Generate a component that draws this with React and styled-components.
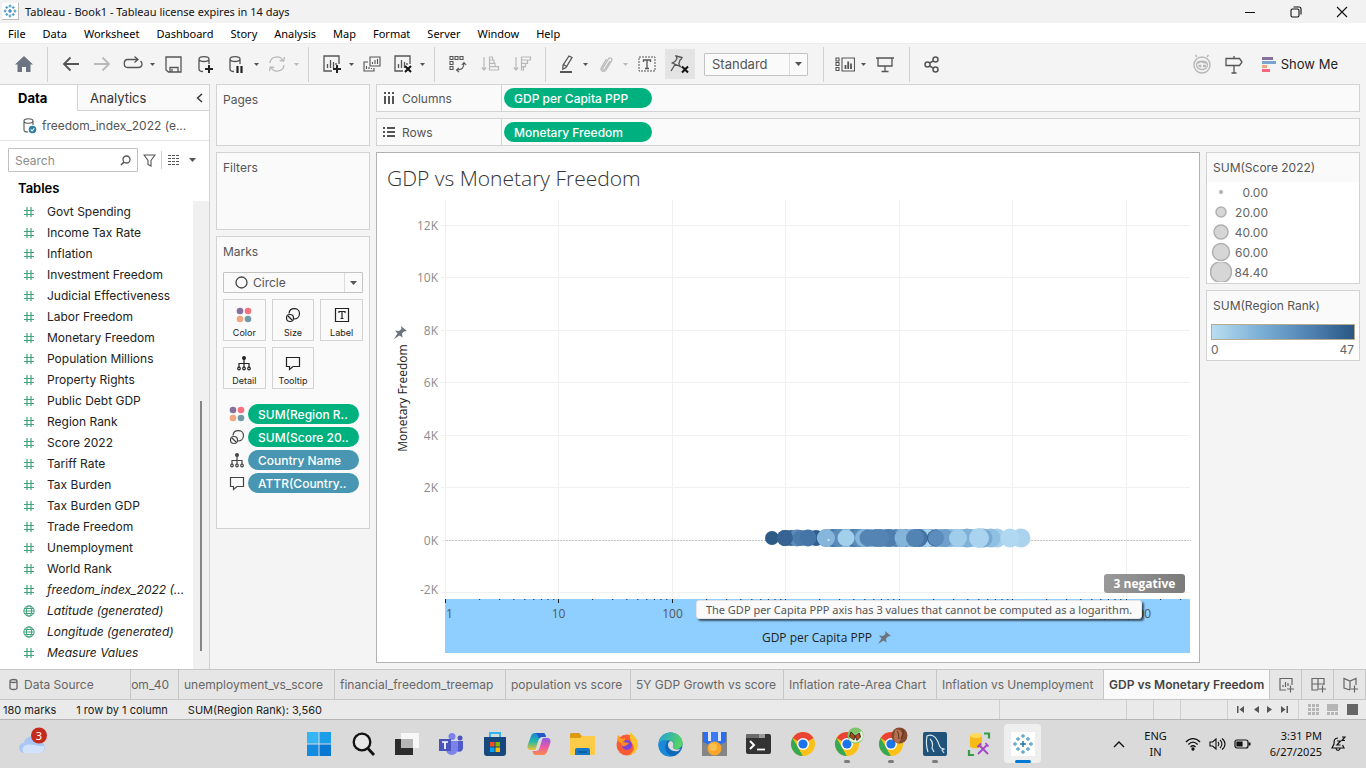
import React from "react";
import styled, { createGlobalStyle, css } from "styled-components";

const ui = `Inter, "Liberation Sans", sans-serif`;
const system = `"Noto Sans", "Open Sans", sans-serif`;
const vizFont = `"Open Sans", "Noto Sans", sans-serif`;
const line = "#d2d2d2";
const green = "#00b180";
const blue = "#4996b2";

const Global = createGlobalStyle`
  *, *::before, *::after { box-sizing: border-box; }
  body { margin: 0; background: #f4f4f4; font-family: ${ui}; font-size: 12px; color: #333; }
  button, select, input { font: inherit; color: inherit; }
  button { background: none; border: 0; padding: 0; }
  svg { display: block; flex: none; }
  ul { list-style: none; margin: 0; padding: 0; }
  h1, h2, h3, p { margin: 0; font-size: 12px; font-weight: 400; }
`;

/* ---------- frame ---------- */
const Page = styled.div`
  min-height: 100vh;
  display: flex;
  flex-direction: column;
`;
const TitleBar = styled.header`
  height: 23px;
  display: flex;
  align-items: center;
  background: #f2f2f2;
  padding: 0 18px 0 2px;
  gap: 6px;
  font-family: ${system};
  font-size: 11px;
  color: #111;
`;
const AppBadge = styled.span`
  display: flex;
  padding: 1px;
  background: #fff;
  border-right: 1px solid #bbb;
  border-bottom: 1px solid #bbb;
`;
const WindowButtons = styled.div`
  margin-left: auto;
  display: flex;
  gap: 34px;
`;
const MenuBar = styled.nav`
  height: 20px;
  display: flex;
  align-items: center;
  gap: 17px;
  padding: 2px 8px 0;
  background: #fff;
  font-family: ${system};
  font-size: 11px;
`;
const MenuItem = styled.button`
  color: #000;
  line-height: 18px;
`;
const Toolbar = styled.div`
  height: 41px;
  display: flex;
  align-items: center;
  padding: 0 28px 0 8px;
  background: #f4f4f4;
  border-top: 1px solid #ececec;
`;
const Tool = styled.button`
  width: ${(p) => p.$w || 31}px;
  height: 30px;
  display: flex;
  align-items: center;
  justify-content: center;
  color: ${(p) => (p.$off ? "#b9b9b9" : "#555")};
  background: ${(p) => (p.$on ? "#e4e4e4" : "none")};
  margin: ${(p) => (p.$on ? "0 9px 0 1px" : "0")};
`;
const Divider = styled.span`
  width: 1px;
  height: 35px;
  margin: 0 7px;
  background: ${line};
`;
const ToolSelectBox = styled.div`
  position: relative;
  width: 104px;
  margin-right: 8px;
`;
const Select = styled.select`
  appearance: none;
  width: 100%;
  height: ${(p) => p.$h}px;
  padding: 0 20px 0 ${(p) => p.$left}px;
  border: 1px solid #c3c3c3;
  border-radius: 1px;
  background: #fafafa;
  font-size: ${(p) => p.$size}px;
  color: #555;
`;
const SelectArrow = styled.span`
  position: absolute;
  top: 1px;
  right: 1px;
  bottom: 1px;
  width: 18px;
  display: flex;
  align-items: center;
  justify-content: center;
  border-left: 1px solid #dcdcdc;
  color: #666;
  pointer-events: none;
`;
const ToolbarEnd = styled.div`
  margin-left: auto;
  display: flex;
  align-items: center;
`;
const ShowMe = styled.button`
  display: flex;
  align-items: center;
  gap: 5px;
  margin-left: 12px;
  font-size: 13px;
  color: #222;
`;

const Main = styled.main`
  flex: 1;
  display: flex;
  background: #f4f4f4;
`;

/* ---------- data pane ---------- */
const DataPane = styled.aside`
  width: 210px;
  flex: none;
  display: flex;
  flex-direction: column;
  background: #fff;
  border-right: 1px solid ${line};
  border-top: 1px solid ${line};
`;
const PaneTabs = styled.div`
  display: flex;
  height: 26px;
`;
const PaneTab = styled.button`
  flex: ${(p) => (p.$active ? "0 0 77px" : "1")};
  display: flex;
  align-items: center;
  justify-content: space-between;
  text-align: left;
  font-size: 13px;
  padding: ${(p) => (p.$active ? "0 0 0 18px" : "0 6px 0 12px")};
  font-weight: ${(p) => (p.$active ? 700 : 400)};
  color: ${(p) => (p.$active ? "#000" : "#333")};
  background: ${(p) => (p.$active ? "#fff" : "#fafafa")};
  ${(p) =>
    !p.$active &&
    css`
      border-left: 1px solid ${line};
      border-bottom: 1px solid ${line};
    `}
`;
const SourceRow = styled.div`
  display: flex;
  align-items: center;
  gap: 5px;
  height: 30px;
  padding-left: 22px;
  border-bottom: 1px solid #e2e2e2;
  color: #555;
`;
const SearchRow = styled.div`
  display: flex;
  align-items: center;
  margin-top: 7px;
  padding-left: 8px;
  color: #555;
`;
const SearchBox = styled.label`
  display: flex;
  align-items: center;
  width: 130px;
  height: 24px;
  border: 1px solid #c0c0c0;
  border-radius: 1px;
  padding: 0 6px;
`;
const SearchInput = styled.input`
  flex: 1;
  min-width: 0;
  border: 0;
  padding: 0;
  outline: 0;
  background: none;
  &::placeholder {
    color: #8c8c8c;
  }
`;
const SmallIcon = styled.button`
  display: flex;
  align-items: center;
  justify-content: center;
  width: ${(p) => p.$w}px;
  height: 18px;
  color: #555;
  border-right: ${(p) => (p.$rule ? `1px solid ${line}` : 0)};
`;
const TablesTitle = styled.h2`
  font-size: 13px;
  font-weight: 600;
  line-height: 29px;
  height: 29px;
  padding: 2px 0 0 18px;
  color: #000;
`;
const FieldArea = styled.div`
  flex: 1;
  display: flex;
`;
const FieldList = styled.ul`
  flex: 1;
  min-width: 0;
`;
const Field = styled.li`
  display: flex;
  align-items: center;
  gap: 12px;
  height: 21px;
  padding-left: 23px;
  white-space: nowrap;
  color: #222;
  font-style: ${(p) => (p.$italic ? "italic" : "normal")};
`;
const Track = styled.div`
  width: 16px;
  background: #f0f0f0;
  padding: 200px 0 0 7px;
`;
const Thumb = styled.div`
  width: 2px;
  height: 250px;
  background: #858585;
`;

/* ---------- cards ---------- */
const CardColumn = styled.div`
  width: 154px;
  flex: none;
  margin-left: 6px;
  display: flex;
  flex-direction: column;
  gap: 6px;
`;
const Card = styled.section`
  min-height: ${(p) => p.$h}px;
  border: 1px solid ${line};
  background: #fafafa;
  padding: 6px;
`;
const CardTitle = styled.h2`
  line-height: 18px;
  color: #555;
`;
const MarkSelect = styled.div`
  position: relative;
  margin: 11px 0 6px;
  color: #444;
`;
const MarkGlyph = styled.span`
  position: absolute;
  left: 12px;
  top: 4px;
  pointer-events: none;
`;
const MarkGrid = styled.div`
  display: grid;
  grid-template-columns: repeat(3, 1fr);
  gap: 6px;
`;
const MarkButton = styled.button`
  height: 42px;
  display: flex;
  flex-direction: column;
  align-items: center;
  justify-content: flex-end;
  gap: 4px;
  padding-bottom: 1px;
  border: 1px solid ${line};
  font-size: 9px;
  line-height: 12px;
  color: #222;
`;
const Encodings = styled.ul`
  display: flex;
  flex-direction: column;
  gap: 3px;
  padding: 15px 4px 0 6px;
`;
const Encoding = styled.li`
  display: flex;
  align-items: center;
  gap: 3px;
  color: #444;
`;
const Pill = styled.button`
  flex: ${(p) => (p.$w ? `0 0 ${p.$w}px` : "1")};
  height: 20px;
  border-radius: 10px;
  padding: 0 10px;
  text-align: left;
  white-space: nowrap;
  overflow: hidden;
  font-weight: 500;
  color: #fff;
  background: ${(p) => p.$color};
`;

/* ---------- worksheet ---------- */
const Workspace = styled.div`
  flex: 1;
  min-width: 0;
  display: flex;
  flex-direction: column;
  gap: 6px;
  padding: 0 6px 6px;
`;
const Shelf = styled.section`
  display: flex;
  height: 28px;
  border: 1px solid ${line};
  background: #fafafa;
`;
const ShelfName = styled.h2`
  width: 125px;
  display: flex;
  align-items: center;
  gap: 7px;
  padding-left: 6px;
  margin-right: 2px;
  border-right: 1px solid ${line};
  color: #555;
`;
const ShelfBody = styled.div`
  display: flex;
  align-items: center;
`;
const SheetArea = styled.div`
  flex: 1;
  display: flex;
  gap: 6px;
`;
const Viz = styled.section`
  flex: 1;
  min-width: 0;
  background: #fff;
  border: 1px solid #b2b2b2;
`;
const VizTitle = styled.h1`
  height: 46px;
  padding: 9px 10px 0;
  font-family: ${vizFont};
  font-size: 21px;
  font-weight: 300;
  line-height: 32px;
  color: #333;
`;
const ChartBox = styled.div`
  position: relative;
  font-family: ${vizFont};
`;
const Chart = styled.svg`
  width: 100%;
  height: auto;
`;
const Tooltip = styled.div`
  position: absolute;
  right: 57px;
  bottom: 39px;
  width: 446px;
  height: 19px;
  border: 1px solid #e4e4e4;
  border-radius: 3px;
  background: #fafafa;
  box-shadow: 2px 2px 2px rgba(0, 0, 0, 0.6);
  font-family: ${system};
  font-size: 11px;
  line-height: 17px;
  text-align: center;
  white-space: nowrap;
  color: #555;
`;
const NegativeBadge = styled.button`
  position: absolute;
  right: 14px;
  bottom: 65px;
  width: 81px;
  height: 19px;
  border-radius: 3px;
  background: linear-gradient(90deg, #9a9a9a, #7a7a7a);
  font-size: 12px;
  font-weight: 700;
  color: #fff;
`;

const Legends = styled.aside`
  width: 154px;
  flex: none;
  display: flex;
  flex-direction: column;
  gap: 6px;
`;
const Legend = styled.section`
  border: 1px solid ${line};
  background: #fff;
`;
const LegendTitle = styled.h2`
  line-height: 29px;
  height: 29px;
  padding-left: 6px;
  background: #fafafa;
  color: #555;
`;
const SizeRow = styled.li`
  display: flex;
  align-items: center;
  height: 20px;
  width: 61px;
  overflow: hidden;
  color: #666;
`;
const SizeDot = styled.svg`
  margin-left: 3px;
`;
const SizeValue = styled.span`
  margin-left: auto;
`;
const SizeList = styled.ul`
  height: 101px;
  overflow: hidden;
`;
const Ramp = styled.div`
  height: 16px;
  margin: 4px 4px 0;
  border: 1px solid #b4ac8c;
  background: linear-gradient(90deg, #b9ddf1, #7db1d8 33%, #4c7eae 72%, #2a5783);
`;
const RampEnds = styled.div`
  display: flex;
  justify-content: space-between;
  padding: 0 5px 0 4px;
  line-height: 20px;
  color: #666;
`;

/* ---------- sheet tabs and status ---------- */
const SheetTabs = styled.nav`
  display: flex;
  height: 31px;
  border-top: 1px solid #c6c6c6;
  border-bottom: 1px solid #c6c6c6;
  background: #e6e6e6;
`;
const SheetTab = styled.button`
  flex: ${(p) => (p.$grow ? 1 : 0)} 0 ${(p) => p.$w}px;
  min-width: 0;
  display: flex;
  align-items: center;
  justify-content: ${(p) => p.$align || "flex-start"};
  gap: 4px;
  padding: 0 ${(p) => (p.$align === "flex-end" ? 9 : 5)}px 0 5px;
  overflow: hidden;
  white-space: nowrap;
  border-right: 1px solid #c6c6c6;
  color: ${(p) => (p.$active ? "#444" : "#666")};
  font-weight: ${(p) => (p.$active ? 600 : 400)};
  background: ${(p) => (p.$active ? "#fafafa" : "none")};
`;
const StatusBar = styled.footer`
  display: flex;
  height: 20px;
  background: #eaeaea;
  border-bottom: 1px solid #b5b5b5;
  font-size: 11px;
  line-height: 20px;
  color: #222;
`;
const StatusTexts = styled.div`
  flex: 1;
  display: flex;
  gap: 20px;
  padding-left: 3px;
`;
const StatusCell = styled.div`
  width: ${(p) => p.$w}px;
  display: flex;
  align-items: center;
  justify-content: space-evenly;
  border-left: 1px solid #cfcfcf;
  color: #666;
`;

/* ---------- taskbar ---------- */
const Taskbar = styled.footer`
  height: 48px;
  display: flex;
  align-items: center;
  background: #dadada;
  font-family: ${system};
  font-size: 11px;
  color: #111;
`;
const TaskSide = styled.div`
  flex: 297 0 0;
  padding-left: 18px;
`;
const TaskIcons = styled.div`
  flex: none;
  display: flex;
`;
const TaskIcon = styled.button`
  position: relative;
  width: 44px;
  height: 48px;
  display: flex;
  align-items: center;
  justify-content: center;
  &::before {
    content: "";
    position: absolute;
    inset: 4px 4px 5px 3px;
    z-index: 0;
    border-radius: 4px;
    background: ${(p) => (p.$active ? "#efefef" : "none")};
  }
  &::after {
    content: "";
    position: absolute;
    bottom: 5px;
    left: 50%;
    height: 3px;
    border-radius: 2px;
    width: ${(p) => (p.$active ? 16 : 6)}px;
    margin-left: ${(p) => (p.$active ? -8 : -3)}px;
    background: ${(p) => (p.$active ? "#0078d4" : p.$open ? "#7c7c7c" : "none")};
  }
  svg {
    position: relative;
  }
`;
const Tray = styled.div`
  flex: 321 0 0;
  display: flex;
  align-items: center;
  justify-content: flex-end;
  padding-right: 20px;
`;
const TrayText = styled.div`
  line-height: 16px;
  text-align: ${(p) => p.$align};
  margin-right: ${(p) => p.$gap}px;
`;
const TrayIcons = styled.div`
  display: flex;
  align-items: center;
  gap: 8px;
  margin-right: 19px;
`;

/* ---------- icons ---------- */
const Svg = ({ w = 20, h = w, vb, sw = 1.3, children }) => (
  <svg width={w} height={h} viewBox={vb || `0 0 ${w} ${h}`} fill="none" stroke="currentColor" strokeWidth={sw}>
    {children}
  </svg>
);
const Caret = ({ off }) => (
  <svg width="5" height="3" viewBox="0 0 5 3" fill={off ? "#b9b9b9" : "#555"}>
    <path d="M0 0h5L2.500 3z" />
  </svg>
);
const ArrowDown = () => (
  <svg width="7" height="4" viewBox="0 0 7 4" fill="#555">
    <path d="M0 0h7L3.500 4z" />
  </svg>
);
const Plus = ({ x, y }) => <path d={`M${x - 4} ${y}h8M${x} ${y - 4}v8`} stroke="#222" strokeWidth="2" />;
const Cross = ({ x, y }) => <path d={`M${x - 3} ${y - 3}l6 6M${x + 3} ${y - 3}l-6 6`} stroke="#111" strokeWidth="2" />;
const Cylinder = () => <path d="M2 4v10c0 1.500 2 2.500 4 2.500M12 4v5M2 4c0-3.300 10-3.300 10 0s-10 3.300-10 0z" />;

const HomeIcon = () => (
  <svg width="18" height="16" viewBox="0 0 18 16" fill="#6b7480">
    <path d="M9 0l9 8.500h-2.500V16H11v-5H7v5H2.500V8.500H0z" />
  </svg>
);
const BackIcon = ({ flip }) => (
  <Svg w={18} h={16} sw={1.8}>
    <path d={flip ? "M1 8h15M9.500 1.500L16 8l-6.500 6.500" : "M17 8H2M8.500 1.500L2 8l6.500 6.500"} />
  </Svg>
);
const RedoIcon = () => (
  <Svg w={20} h={16}>
    <path d="M14 3.500H4.500c-4.300 0-4.300 8 0 8h11c4 0 4.300-4.500 2-6.500M11.500 .5l3.500 3-3.500 3" />
  </Svg>
);
const SaveIcon = () => (
  <Svg w={17}>
    <path d="M1 1h15v15H3.500L1 14zM5 16v-4.500h8V16M7 13v3" />
  </Svg>
);
const DbPlus = () => (
  <Svg w={17} h={19}>
    <Cylinder />
    <Plus x={12} y={14} />
  </Svg>
);
const DbPause = () => (
  <Svg w={17} h={19}>
    <Cylinder />
    <path d="M9.500 11v7M13.500 11v7" stroke="#222" strokeWidth="2.200" />
  </Svg>
);
const RefreshIcon = () => (
  <Svg w={18} h={16}>
    <path d="M2 7c.5-7 10-8 13-2.500M16.500 1l-.8 4-4-.5M16 9c-.5 7-10 8-13 2.500M1.500 15l.8-4 4 .5" />
  </Svg>
);
const SheetIcon = ({ cross }) => (
  <Svg w={20} h={18}>
    <path d="M10 16H2V1h15v8M5.500 13V9M8.500 13V5M11.500 13V7M14 10V8" />
    {cross ? <Cross x={15} y={14} /> : <Plus x={15} y={14} />}
  </Svg>
);
const DupIcon = () => (
  <Svg w={18} h={17} sw={1.1}>
    <path d="M7 1h10v9H7zM9.500 8V6M12 8V4M14.500 8V3M5 6H1v9h10v-3M3.500 13v-3M6 13v-2M8.500 13v-1" />
  </Svg>
);
const SwapIcon = () => (
  <Svg w={18} h={18} sw={1.1}>
    <path d="M1 1.500h3v3H1zM6 1.500h3v3H6zM11 1.500h3v3h-3zM1 6.500h3v3H1zM1 11.500h3v3H1zM15 8c0 5-3 7-7 7M12.800 10L15 7.500l2.200 2.500M10 12.800L7.500 15l2.500 2.200" />
  </Svg>
);
const SortIcon = ({ desc }) => (
  <Svg w={19} h={16} sw={1.2}>
    <path d="M3 1v13M.8 11.500L3 14l2.200-2.500" />
    <path d={desc ? "M8.500 1h9v3h-9zM8.500 4h6v3.300h-6zM8.500 7.300h4v3.300h-4zM8.500 10.600h2V14h-2z" : "M8.500 1h3v3h-3zM8.500 4h4.500v3.300H8.500zM8.500 7.300H14v3.300H8.500zM8.500 10.600h9V14h-9z"} />
  </Svg>
);
const PenIcon = () => (
  <Svg w={16} h={20}>
    <path d="M10 2l3 1.500-6 10-3.200 1.700.2-4zM4.500 10.500l3 2" />
    <path d="M1 18h12" strokeWidth="2" />
  </Svg>
);
const ClipIcon = () => (
  <Svg w={14} h={18}>
    <path d="M11 6L6 14c-1 1.500-3 .3-2-1.200L9.500 4c1.500-2.300 4.500-.5 3 2L7 15c-2 3-6.500.5-4.500-2.700L7.500 4" />
  </Svg>
);
const TextBox = () => (
  <Svg w={18} h={16}>
    <path d="M1 1h16v14H1z" strokeDasharray="2 1" strokeWidth="1" />
    <path d="M5.500 6V4h7v2M9 4v8.500M7 12.500h4" />
  </Svg>
);
const PinX = () => (
  <Svg w={20} h={19}>
    <path d="M6 1l6 1.500-.8 1.800L10 5l-1.200 4 1.500 2.500-8-3.500L5 6.500l2-3zM5 9.500L1 16" />
    <Cross x={15} y={14.500} />
  </Svg>
);
const CardsIcon = () => (
  <Svg w={20} h={15} sw={1.1}>
    <path d="M1 1h3v3H1zM1 5.500h3v3H1zM1 10.500h3v3H1zM7 1h12.500v13H7z" />
    <path d="M10.500 12V8M13.200 12V4.500M16 12V6.500" strokeWidth="1.800" />
  </Svg>
);
const PresentIcon = () => (
  <Svg w={18} h={17}>
    <path d="M0 2h18M2 2v8h14V2M9 10v5.500M5.500 15.500h7" />
  </Svg>
);
const ShareIcon = () => (
  <Svg w={16} h={17} sw={1.5}>
    <circle cx="3.500" cy="8.500" r="2.500" />
    <circle cx="11.500" cy="3.500" r="2.500" />
    <circle cx="11.500" cy="13.500" r="2.500" />
    <path d="M5.700 7l3.600-2.200M5.700 10l3.600 2.200" />
  </Svg>
);
const RobotIcon = () => (
  <Svg w={20} h={20} sw={1.4}>
    <circle cx="10" cy="11" r="8" />
    <path d="M5 3L3.500 1M15 3l1.500-2M4.500 11c0-5 11-5 11 0 0 6-11 6-11 0zM6 9l3-1.500 2 1 4 .5" />
    <path d="M6.500 12h3M11 12h3" strokeWidth="2.500" />
  </Svg>
);
const SignIcon = () => (
  <Svg w={18} h={19}>
    <path d="M1 3.500h13.500L17 7l-2.500 3.500H1zM9 1v2.500M9 10.500V18M6.500 18h5" />
  </Svg>
);
const ShowMeIcon = () => (
  <svg width="14" height="15" viewBox="0 0 14 15">
    <path d="M0 0h11v3H0z" fill="#86719b" />
    <path d="M0 4h14v3H0z" fill="#7ba3cf" />
    <path d="M0 8h5v3H0z" fill="#f2a47c" />
    <path d="M0 12h8v3H0z" fill="#f7647c" />
  </svg>
);
const HashIcon = () => (
  <svg width="12" height="12" viewBox="0 0 12 12" stroke="#3fa47c" strokeWidth="1.200">
    <path d="M4 1v10M8 1v10M1 4.500h10M1 8.500h10" />
  </svg>
);
const GlobeIcon = () => (
  <svg width="12" height="12" viewBox="0 0 12 12" stroke="#3fa47c" strokeWidth="1" fill="none">
    <circle cx="6" cy="6" r="5.200" />
    <ellipse cx="6" cy="6" rx="2.500" ry="5.200" />
    <path d="M1 6h10M1.800 3.500h8.400M1.800 8.500h8.400" />
  </svg>
);
const SourceIcon = () => (
  <Svg w={15} h={17} sw={1.1}>
    <path d="M2 4v9c0 1.500 2 2 4 2M11 4v4M2 4c0-3 9-3 9 0s-9 3-9 0z" />
    <circle cx="10.500" cy="12.500" r="3.800" fill="#2f7fa3" stroke="none" />
    <path d="M8.800 12.500l1.300 1.300 2.200-2.500" stroke="#fff" />
  </Svg>
);
const LensIcon = () => (
  <Svg w={11} h={11}>
    <circle cx="6.500" cy="4.500" r="3.500" />
    <path d="M4 7L1 10" strokeWidth="1.600" />
  </Svg>
);
const FunnelIcon = () => (
  <Svg w={13} h={13} sw={1.1}>
    <path d="M1 1h11L8 6.500V12L5 10.500v-4z" />
  </Svg>
);
const RowsIcon = () => (
  <Svg w={12} h={10} sw={1}>
    <path d="M0 .5h12M0 3.500h12M0 6.500h12M0 9.500h12" strokeDasharray="3 1" strokeWidth="1" />
  </Svg>
);
const ColorDots = () => (
  <svg width="16" height="16" viewBox="0 0 16 16">
    <circle cx="4" cy="4" r="3.300" fill="#86719b" />
    <circle cx="12" cy="4" r="3.300" fill="#f7717f" />
    <circle cx="4" cy="12" r="3.300" fill="#f2a57e" />
    <circle cx="12" cy="12" r="3.300" fill="#7299a6" />
  </svg>
);
const SizeIcon = () => (
  <Svg w={16} h={16} sw={1.2}>
    <path d="M4 6.500C4.500 0 14.500 0 14.500 6.500c0 4-3 5.500-5.500 5.500" />
    <circle cx="5" cy="11" r="3.500" />
    <path d="M3 9l4 4" />
  </Svg>
);
const LabelIcon = () => (
  <Svg w={16} h={16} sw={1.2}>
    <path d="M1.500 1.500h13v13h-13zM5 6V4.500h6V6M8 4.500v7M6.500 11.500h3" />
  </Svg>
);
const DetailIcon = () => (
  <Svg w={16} h={16} sw={1.2}>
    <circle cx="8" cy="3" r="2" fill="currentColor" stroke="none" />
    <path d="M8 4v8M3 12V8.500h10V12" />
    <circle cx="3" cy="13.500" r="1.300" />
    <circle cx="8" cy="13.500" r="1.300" />
    <circle cx="13" cy="13.500" r="1.300" />
  </Svg>
);
const TooltipIcon = () => (
  <Svg w={16} h={16} sw={1.2}>
    <path d="M1.500 2.500h13v9H8L4.500 14.500v-3h-3z" />
  </Svg>
);
const PinShape = ({ x, y }) => (
  <path
    transform={`translate(${x} ${y})`}
    d="M7 0l6 5-3 .5-2 2 .5 4-3-2L0 13l3.500-5.500-2.500-3L5 5l2.500-2z"
    fill="#6b7480"
  />
);
const TableauIcon = ({ size = 14 }) => (
  <svg width={size} height={size} viewBox="0 0 24 24" fill="none" stroke="#3a8fbd" strokeWidth="1.800">
    <path d="M12 8.500v7M8.500 12h7" stroke="#2377a8" strokeWidth="2" />
    <path d="M12 1v5M9.500 3.500h5M12 18v5M9.500 20.500h5M3.500 9.500v5M1 12h5M20.500 9.500v5M18 12h5" />
    <path d="M6.500 3.500v5M4 6h5M17.500 3.500v5M15 6h5M6.500 15.500v5M4 18h5M17.500 15.500v5M15 18h5" stroke="#4f9cc4" />
  </svg>
);
const teamsShade = "#4b53bc";
const WindowsIcon = () => (
  <svg width="24" height="24" viewBox="0 0 24 24">
    <path d="M0 0h11.500v11.500H0z" fill="#35b5f2" />
    <path d="M12.500 0H24v11.500H12.500z" fill="#1b9de9" />
    <path d="M0 12.500h11.500V24H0z" fill="#128be0" />
    <path d="M12.500 12.500H24V24H12.500z" fill="#0878d3" />
  </svg>
);
const SearchTask = () => (
  <Svg w={24} h={24} sw={2.3}>
    <circle cx="11" cy="10" r="8.300" fill="#e6e6e6" />
    <path d="M17 16.500l6 6.500" strokeWidth="2.800" />
  </Svg>
);
const TaskView = () => (
  <svg width="24" height="24" viewBox="0 0 24 24">
    <path d="M0 7h18v16H0z" fill="#2c2c2c" />
    <path d="M6 1h18v15H6z" fill="#f7f7f7" />
    <path d="M6 7h12v9H6z" fill="#b5b5b5" />
  </svg>
);
const TeamsIcon = () => (
  <svg width="26" height="24" viewBox="0 0 26 24">
    <circle cx="22" cy="6" r="2.500" fill={teamsShade} />
    <circle cx="14" cy="4.500" r="3.500" fill="#7b83eb" />
    <path d="M18 9h7v7c0 4-5 5-7 2z" fill="#5059c9" />
    <path d="M8 9h12v7c0 9-12 9-12 1z" fill="#7b83eb" />
    <path d="M1 7h12v12H1z" fill={teamsShade} />
    <path d="M4 10h6M7 10v7" stroke="#fff" strokeWidth="1.700" />
  </svg>
);
const StoreIcon = () => (
  <svg width="24" height="24" viewBox="0 0 24 24">
    <path d="M7 6V1h10v5" fill="none" stroke="#2fb6ef" strokeWidth="2" />
    <path d="M1 5h22v16a3 3 0 0 1-3 3H4a3 3 0 0 1-3-3z" fill="#17487d" />
    <path d="M7 10h4.500v4.500H7z" fill="#f25022" />
    <path d="M12.500 10H17v4.500h-4.500z" fill="#7fba00" />
    <path d="M7 15.500h4.500V20H7z" fill="#00a4ef" />
    <path d="M12.500 15.500H17V20h-4.500z" fill="#ffb900" />
  </svg>
);
const CopilotIcon = () => (
  <svg width="24" height="24" viewBox="0 0 24 24">
    <defs>
      <linearGradient id="cpA" x1="0" y1="0" x2="0" y2="1">
        <stop offset="0" stopColor="#1686d8" />
        <stop offset=".5" stopColor="#25b8a5" />
        <stop offset="1" stopColor="#f2c230" />
      </linearGradient>
      <linearGradient id="cpB" x1="0" y1="0" x2="0" y2="1">
        <stop offset="0" stopColor="#8c5be8" />
        <stop offset=".5" stopColor="#e858a8" />
        <stop offset="1" stopColor="#f98a4b" />
      </linearGradient>
    </defs>
    <path d="M8 1h8c2 0 2.500 2 3 4h-4c-2 0-3 1-3.500 3L9 16c-.5 1.500-1 2-2 2H4c-3 0-4-2-3.300-5L4 4c.7-2 2-3 4-3z" fill="url(#cpA)" />
    <path d="M16 23H8.500c-2 0-2.500-2-3-4h3.500c2 0 3-1 3.500-3L15 8c.5-1.500 1-2 2-2h3c3 0 4 2 3.300 5L20 20c-.7 2-2 3-4 3z" fill="url(#cpB)" />
    <path d="M8 1h8c2 0 2.500 2 3 4h-4c-2 0-2.500 1-3 2C11 4 11 2 8 1z" fill="#2257c9" />
  </svg>
);
const FolderIcon = () => (
  <svg width="25" height="23" viewBox="0 0 25 23">
    <path d="M0 1.500A1.500 1.500 0 0 1 1.500 0H9l3 3v5H0z" fill="#dc9a11" />
    <path d="M0 5h10l2-2h12a1 1 0 0 1 1 1v17a1 1 0 0 1-1 1H1a1 1 0 0 1-1-1z" fill="#fccb47" />
    <path d="M5 22v-5a2 2 0 0 1 2-2h11a2 2 0 0 1 2 2v5z" fill="#1478c8" />
    <path d="M8 19h9" stroke="#0a5596" strokeWidth="1.500" />
  </svg>
);
const FirefoxIcon = () => (
  <svg width="24" height="24" viewBox="0 0 24 24">
    <circle cx="12" cy="13" r="10.500" fill="#fb5a36" />
    <path d="M15 0c2 3 8 5 8 13 0 6-5 10-10 10 5-2 7-6 5-10-1-3-4-4-3-13z" fill="#ffc229" />
    <path d="M2 8l1-5 4 4 3-1c-1 2 0 3 2 4l-4 3z" fill="#ff9a1f" />
    <circle cx="12" cy="13" r="5" fill="#7a44d8" />
    <path d="M6 11c3-2 5 0 8 0-1 2-3 2-4 3-2 1-4-1-4-3z" fill="#ff8a24" />
  </svg>
);
const EdgeIcon = () => (
  <svg width="25" height="25" viewBox="0 0 25 25">
    <defs>
      <linearGradient id="edA" x1="0" y1="0" x2="1" y2=".3">
        <stop offset="0" stopColor="#1f9fe0" />
        <stop offset="1" stopColor="#55d364" />
      </linearGradient>
    </defs>
    <circle cx="12.500" cy="12.500" r="12" fill="#1167b8" />
    <path d="M.5 12C1 5 6 .5 12.500.5S24.500 5 24.500 11c0 4-3 6-6.500 6-3 0-4-1.500-3-3 1.500-2.500-.5-5.500-3.500-5.500C6.500 8.500 2 9 .5 12z" fill="url(#edA)" />
    <path d="M15 14c-1 3 3 4 8 3l-3 2c-5 1-10-2-10-6 0-2 1-4 3-4 2 .5 3 3 2 5z" fill="#dadada" />
    <path d="M9 10c-4 5-1 12 5 14C4 26 0 18 .5 12 2 8 7 7 9 10z" fill="#1a8ad8" />
  </svg>
);
const MedalIcon = () => (
  <svg width="25" height="24" viewBox="0 0 25 24">
    <path d="M0 0h25v24H0z" fill="#858585" />
    <path d="M1 0h5v8l6 4 7-4V0h5v10l-12 5L1 10z" fill="#2d6ef0" />
    <path d="M6 0h3v9H6zM16 0h3v9h-3z" fill="#dfe8fb" />
    <path d="M9 0h7v10H9z" fill="#3a7af5" />
    <circle cx="12.500" cy="16.500" r="7" fill="#f8a62b" />
    <circle cx="11" cy="15" r="4" fill="#fbbf4d" />
  </svg>
);
const TerminalIcon = () => (
  <svg width="25" height="20" viewBox="0 0 25 20">
    <rect width="25" height="20" rx="2" fill="#333" />
    <path d="M0 4V2a2 2 0 0 1 2-2h11v4z" fill="#6b6b6b" />
    <path d="M13 0h6v4h-6z" fill="#9a9a9a" />
    <path d="M4 7l4 4-4 4" fill="none" stroke="#fff" strokeWidth="2" />
    <path d="M11 15.500h8" stroke="#fff" strokeWidth="1.800" />
  </svg>
);
const ChromeIcon = ({ badge }) => (
  <svg width="34" height="34" viewBox="0 0 34 34">
    <circle cx="17" cy="17" r="12" fill="#fbc116" />
    <path d="M17 17L6.600 11A12 12 0 0 1 27.400 11z" fill="#ea4335" />
    <path d="M6.600 11L13 22l4 7A12 12 0 0 1 6.600 11z" fill="#34a853" />
    <path d="M13 22l4 7 6-10z" fill="#fbc116" />
    <circle cx="17" cy="17" r="6" fill="#fff" />
    <circle cx="17" cy="17" r="4.600" fill="#1a73e8" />
    {badge === "butterfly" && (
      <g>
        <circle cx="25.500" cy="8.500" r="8" fill="#7fc46b" />
        <path d="M18.500 12c4-1 9-6 13-8 2 3 2 7 0 9-3 3-9 4-13-1z" fill="#e3efdb" />
        <path d="M25 9l-4-4-1.500 4.500L24 13zM25 9l4.500-3 1 4-3.500 3.500z" fill="#b0481d" stroke="#2d1a10" strokeWidth=".8" />
      </g>
    )}
    {badge === "photo" && (
      <g>
        <circle cx="25.500" cy="8.500" r="8" fill="#85492f" />
        <path d="M21 3c4-2 8 2 7 5s-1 6-4 8c-3 0-4-3-4-6z" fill="#b4714f" />
        <path d="M23 4c2 1 1 5 2 8M29 3c1 3-1 6-2 9" stroke="#5e3020" strokeWidth="1" fill="none" />
      </g>
    )}
  </svg>
);
const DolphinIcon = () => (
  <svg width="24" height="24" viewBox="0 0 24 24">
    <rect width="24" height="24" rx="2" fill="#1f5379" />
    <path d="M5 20C3 14 3 9 4 4c4-2 8 0 10 4 2 3 2 7 4 8l3 1-2 1 2 3M7 7c3 3 3 6 2 9l2 4" fill="none" stroke="#d8e8f0" strokeWidth="1.200" />
  </svg>
);
const DbToolIcon = () => (
  <svg width="24" height="24" viewBox="0 0 24 24">
    <path d="M3 3v11c0 3 12 3 12 0V3z" fill="#f7ba16" />
    <ellipse cx="9" cy="3.500" rx="6" ry="2.500" fill="#fdd95c" />
    <path d="M17 1.500h5v5M2 18v5h5" fill="none" stroke="#359b48" strokeWidth="2.200" />
    <path d="M12 13l9 9M20 13l-9 9M10.500 15l3.500-3.500M18.500 11l3 3.500" stroke="#a346c9" strokeWidth="1.800" />
  </svg>
);
const TableauTask = () => (
  <svg width="24" height="24" viewBox="0 0 24 24">
    <path d="M0 0h24v24H0z" fill="#fff" />
    <path d="M12 9v6M9 12h6" stroke="#2377a8" strokeWidth="1.500" />
    <path d="M12 2v4M10 4h4M12 18v4M10 20h4M4 10v4M2 12h4M20 10v4M18 12h4M7 5v4M5 7h4M17 5v4M15 7h4M7 15v4M5 17h4M17 15v4M15 17h4" stroke="#5fa5c8" strokeWidth="1.300" />
  </svg>
);
const WeatherIcon = () => (
  <svg width="32" height="34" viewBox="0 0 32 34">
    <path d="M6 27a5 5 0 0 1 0-10c1-8 13-9 15-2 7 0 8 12 1 12z" fill="#a9c6f5" />
    <path d="M6 27a5 5 0 0 1 0-7c6-4 14 1 20 0 1 4-1 7-4 7z" fill="#d3e2fb" />
    <circle cx="21" cy="9.500" r="8" fill="#c42b1c" />
    <text x="21" y="13.500" fill="#fff" fontSize="11" fontFamily="Noto Sans, sans-serif" textAnchor="middle">3</text>
  </svg>
);

/* ---------- data ---------- */
const menus = ["File", "Data", "Worksheet", "Dashboard", "Story", "Analysis", "Map", "Format", "Server", "Window", "Help"];
const fields = [
  "Govt Spending", "Income Tax Rate", "Inflation", "Investment Freedom", "Judicial Effectiveness", "Labor Freedom",
  "Monetary Freedom", "Population Millions", "Property Rights", "Public Debt GDP", "Region Rank", "Score 2022",
  "Tariff Rate", "Tax Burden", "Tax Burden GDP", "Trade Freedom", "Unemployment", "World Rank",
].map((name) => ({ name })).concat([
  { name: "freedom_index_2022 (...", italic: true },
  { name: "Latitude (generated)", italic: true, globe: true },
  { name: "Longitude (generated)", italic: true, globe: true },
  { name: "Measure Values", italic: true },
]);
const marks = [
  { name: "Color", Icon: ColorDots },
  { name: "Size", Icon: SizeIcon },
  { name: "Label", Icon: LabelIcon },
  { name: "Detail", Icon: DetailIcon },
  { name: "Tooltip", Icon: TooltipIcon },
];
const encodings = [
  { text: "SUM(Region R..", Icon: ColorDots, color: green },
  { text: "SUM(Score 20..", Icon: SizeIcon, color: green },
  { text: "Country Name", Icon: DetailIcon, color: blue },
  { text: "ATTR(Country..", Icon: TooltipIcon, color: blue },
];
const sizes = [
  { v: "0.00", r: 2 },
  { v: "20.00", r: 5 },
  { v: "40.00", r: 7 },
  { v: "60.00", r: 8.5 },
  { v: "84.40", r: 10.5 },
];
const sheets = [
  { name: "om_40", w: 48, align: "flex-end" },
  { name: "unemployment_vs_score", w: 156 },
  { name: "financial_freedom_treemap", w: 171 },
  { name: "population vs score", w: 125 },
  { name: "5Y GDP Growth vs score", w: 153 },
  { name: "Inflation rate-Area Chart", w: 153 },
  { name: "Inflation vs Unemployment", w: 167 },
  { name: "GDP vs Monetary Freedom", w: 166, active: true },
];
const yTicks = ["12K", "10K", "8K", "6K", "4K", "2K", "0K", "-2K"].map((label, i) => ({
  label,
  y: Math.floor(26 + i * 52.5) + 0.5,
}));
/* the tooltip lies over the labels of the middle decades */
const xTicks = ["1", "10", "100", "", "", "", "1,000,000"].map((label, i) => ({
  label,
  x: Math.floor(68 + i * 113.5) + 0.5,
}));
const minorTicks = xTicks.flatMap((t) => [2, 3, 4, 5, 6, 7, 8, 9].map((n) => t.x + 113.5 * Math.log10(n))).filter((x) => x < 812);
const bandShades = ["#5b8dbc", "#6fa0cb", "#4f80b0", "#78a9d2"];
const band = Array.from({ length: 32 }, (_, i) => [449 + i * 5, 9, i > 24 ? "#86b6dc" : bandShades[(i * 3) % 4]]);
const points = [
  [408, 8, "#335f8f"], [414, 8, "#3a6797"], [420, 8.5, "#5b8dbc"], [424, 8, "#4a7bab"], [439, 8, "#2f5f8f"],
  [431, 8.5, "#4475a6"], [395, 7, "#2d5b88"], [408, 8, "#376392"],
  ...band,
  [456, 9, "#4878a8"], [462, 9, "#5a8cba"], [476, 9, "#4878a8"], [482, 9, "#5a8cba"], [487, 9, "#86b6dc"],
  [449, 9, "#86b6dc"], [469, 8.5, "#a2cfea"], [512, 9, "#4c7dad"], [503, 9, "#5384b4"], [491, 8.5, "#5384b4"],
  [550, 9, "#a9d3ee"], [526, 8.5, "#84b4da"], [542, 9, "#4574a4"], [538, 9, "#5283b3"], [568, 9, "#6fa0cc"],
  [558, 8, "#2f5f8f"], [559, 8, "#5b8cbb"], [590, 9.5, "#7fb0d6"], [620, 9.5, "#a5d0ed"], [614, 9.5, "#8fbfe1"],
  [606, 9.5, "#78a9d2"], [581, 9, "#a0cde9"], [602, 10, "#a9d3ee"], [644, 9.5, "#abd3ed"], [633, 9.5, "#b0d8f0"],
];
const taskIcons = [
  { name: "Start", Icon: WindowsIcon }, { name: "Search", Icon: SearchTask }, { name: "Task view", Icon: TaskView },
  { name: "Teams", Icon: TeamsIcon }, { name: "Store", Icon: StoreIcon }, { name: "Copilot", Icon: CopilotIcon },
  { name: "Files", Icon: FolderIcon }, { name: "Firefox", Icon: FirefoxIcon }, { name: "Edge", Icon: EdgeIcon },
  { name: "Medal", Icon: MedalIcon }, { name: "Terminal", Icon: TerminalIcon }, { name: "Chrome", Icon: ChromeIcon },
  { name: "Chrome profile 1", Icon: ChromeIcon, badge: "butterfly", open: true },
  { name: "Chrome profile 2", Icon: ChromeIcon, badge: "photo", open: true },
  { name: "MySQL Workbench", Icon: DolphinIcon, open: true }, { name: "Database tools", Icon: DbToolIcon },
  { name: "Tableau", Icon: TableauTask, active: true },
];

const CaretTool = ({ off, label }) => (
  <Tool $w={9} aria-label={label}>
    <Caret off={off} />
  </Tool>
);

function TopToolbar() {
  return (
    <Toolbar>
      <Tool $w={32} aria-label="Home"><HomeIcon /></Tool>
      <Divider />
      <Tool aria-label="Back"><BackIcon /></Tool>
      <Tool $off aria-label="Forward"><BackIcon flip /></Tool>
      <Tool aria-label="Replay"><RedoIcon /></Tool>
      <CaretTool label="Replay options" />
      <Tool $w={32} aria-label="Save"><SaveIcon /></Tool>
      <Tool $w={32} aria-label="New data source"><DbPlus /></Tool>
      <Tool aria-label="Pause updates"><DbPause /></Tool>
      <CaretTool label="Pause options" />
      <Tool $off aria-label="Refresh"><RefreshIcon /></Tool>
      <CaretTool off label="Refresh options" />
      <Divider />
      <Tool aria-label="New worksheet"><SheetIcon /></Tool>
      <CaretTool label="New sheet options" />
      <Tool aria-label="Duplicate"><DupIcon /></Tool>
      <Tool aria-label="Clear sheet"><SheetIcon cross /></Tool>
      <CaretTool label="Clear options" />
      <Divider />
      <Tool $w={32} aria-label="Swap rows and columns"><SwapIcon /></Tool>
      <Tool $w={32} $off aria-label="Sort ascending"><SortIcon /></Tool>
      <Tool $w={32} $off aria-label="Sort descending"><SortIcon desc /></Tool>
      <Divider />
      <Tool $w={28} aria-label="Highlight"><PenIcon /></Tool>
      <CaretTool label="Highlight options" />
      <Tool $off aria-label="Group"><ClipIcon /></Tool>
      <CaretTool off label="Group options" />
      <Tool $w={34} aria-label="Show mark labels"><TextBox /></Tool>
      <Tool $w={30} $on aria-label="Clear fixed axes"><PinX /></Tool>
      <ToolSelectBox>
        <Select $h={23} $left={7} $size={13} aria-label="Fit">
          <option>Standard</option>
        </Select>
        <SelectArrow><ArrowDown /></SelectArrow>
      </ToolSelectBox>
      <Divider />
      <Tool $w={28} aria-label="Show or hide cards"><CardsIcon /></Tool>
      <CaretTool label="Card options" />
      <Tool $w={34} aria-label="Presentation mode"><PresentIcon /></Tool>
      <Divider />
      <Tool $w={30} aria-label="Share"><ShareIcon /></Tool>
      <ToolbarEnd>
        <Tool $w={32} $off aria-label="Assistant"><RobotIcon /></Tool>
        <Tool $w={32} aria-label="Guide"><SignIcon /></Tool>
        <ShowMe><ShowMeIcon />Show Me</ShowMe>
      </ToolbarEnd>
    </Toolbar>
  );
}

function Scatter() {
  return (
    <Chart viewBox="0 0 822 459" role="img" aria-label="GDP vs Monetary Freedom scatter plot">
      {xTicks.map((t) => (
        <path key={t.x} d={`M${t.x} 1V399`} stroke="#f0f0f0" />
      ))}
      {yTicks.map((t) => (
        <g key={t.label}>
          <path d={`M64 ${t.y}H813`} stroke="#f0f0f0" />
          <text x="61" y={t.label === "-2K" ? t.y + 1 : t.y + 4} textAnchor="end" fontSize="12" fill="#8c8c8c">{t.label}</text>
        </g>
      ))}
      <path d="M69 341.500H814" stroke="#c4c4c4" strokeDasharray="2 1" />
      {points.map(([x, r, color], i) => (
        <circle key={i} cx={x} cy="339" r={r} fill={color} />
      ))}
      <circle cx="451.500" cy="341" r="1.200" fill="#c5e2f5" />
      <rect x="68" y="400" width="745" height="54" fill="#8fcfff" />
      {minorTicks.map((x) => (
        <path key={x} d={`M${x} 400v1`} stroke="#222" />
      ))}
      {xTicks.map((t, i) => (
        <g key={t.x}>
          <path d={`M${t.x} 400v4`} stroke="#222" />
          {t.label && (
            <text x={i === 6 ? 774 : i ? t.x : t.x + 4} y="419" textAnchor={i === 6 ? "end" : "middle"} fontSize="12" fill="#555">{t.label}</text>
          )}
        </g>
      ))}
      <text x="440" y="443" textAnchor="middle" fontSize="12" fill="#222">GDP per Capita PPP</text>
      <PinShape x={501} y={432} />
      <text transform="translate(30 199) rotate(-90)" textAnchor="middle" fontSize="12" fill="#222">Monetary Freedom</text>
      <PinShape x={17} y={127} />
    </Chart>
  );
}

export default function App() {
  return (
    <Page>
      <Global />
      <TitleBar>
        <AppBadge><TableauIcon /></AppBadge>
        <span>Tableau - Book1 - Tableau license expires in 14 days</span>
        <WindowButtons>
          <button aria-label="Minimize"><Svg w={12} h={12} sw={1}><path d="M1 6.500h10" /></Svg></button>
          <button aria-label="Restore">
            <Svg w={12} h={12} sw={1.1}><path d="M3.500 1h5.500c1.500 0 2 .5 2 2v5.500" /><rect x="1" y="3" width="8" height="8" rx="1.500" /></Svg>
          </button>
          <button aria-label="Close"><Svg w={12} h={12} sw={1.1}><path d="M1 1l10 10M11 1L1 11" /></Svg></button>
        </WindowButtons>
      </TitleBar>
      <MenuBar>{menus.map((m) => <MenuItem key={m}>{m}</MenuItem>)}</MenuBar>
      <TopToolbar />

      <Main>
        <DataPane>
          <PaneTabs>
            <PaneTab $active>Data</PaneTab>
            <PaneTab>
              Analytics
              <Svg w={7} h={10} sw={1.4}><path d="M6 1L1.500 5 6 9" /></Svg>
            </PaneTab>
          </PaneTabs>
          <SourceRow><SourceIcon />freedom_index_2022 (e...</SourceRow>
          <SearchRow>
            <SearchBox>
              <SearchInput placeholder="Search" aria-label="Search" />
              <LensIcon />
            </SearchBox>
            <SmallIcon $w={24} $rule aria-label="Filter fields"><FunnelIcon /></SmallIcon>
            <SmallIcon $w={24} aria-label="View as"><RowsIcon /></SmallIcon>
            <SmallIcon $w={12} aria-label="Pane menu"><ArrowDown /></SmallIcon>
          </SearchRow>
          <TablesTitle>Tables</TablesTitle>
          <FieldArea>
            <FieldList>
              {fields.map((f) => (
                <Field key={f.name} $italic={f.italic}>
                  {f.globe ? <GlobeIcon /> : <HashIcon />}
                  {f.name}
                </Field>
              ))}
            </FieldList>
            <Track><Thumb /></Track>
          </FieldArea>
        </DataPane>

        <CardColumn>
          <Card $h={62}><CardTitle>Pages</CardTitle></Card>
          <Card $h={78}><CardTitle>Filters</CardTitle></Card>
          <Card $h={293}>
            <CardTitle>Marks</CardTitle>
            <MarkSelect>
              <Select $h={21} $left={29} $size={12} aria-label="Mark type">
                <option>Circle</option>
              </Select>
              <MarkGlyph><Svg w={13} h={13}><circle cx="6.500" cy="6.500" r="5.500" /></Svg></MarkGlyph>
              <SelectArrow><ArrowDown /></SelectArrow>
            </MarkSelect>
            <MarkGrid>
              {marks.map(({ name, Icon }) => (
                <MarkButton key={name}><Icon />{name}</MarkButton>
              ))}
            </MarkGrid>
            <Encodings>
              {encodings.map(({ text, Icon, color }) => (
                <Encoding key={text}><Icon /><Pill $color={color}>{text}</Pill></Encoding>
              ))}
            </Encodings>
          </Card>
        </CardColumn>

        <Workspace>
          <Shelf>
            <ShelfName>
              <Svg w={12} h={12} sw={2}><path d="M2 0v2M6 0v2M10 0v2M2 4v8M6 4v8M10 4v8" /></Svg>
              Columns
            </ShelfName>
            <ShelfBody><Pill $w={148} $color={green}>GDP per Capita PPP</Pill></ShelfBody>
          </Shelf>
          <Shelf>
            <ShelfName>
              <Svg w={12} h={12} sw={2}><path d="M0 2h2M0 6h2M0 10h2M4 2h8M4 6h8M4 10h8" /></Svg>
              Rows
            </ShelfName>
            <ShelfBody><Pill $w={148} $color={green}>Monetary Freedom</Pill></ShelfBody>
          </Shelf>
          <SheetArea>
            <Viz>
              <VizTitle>GDP vs Monetary Freedom</VizTitle>
              <ChartBox>
                <Scatter />
                <NegativeBadge>3 negative</NegativeBadge>
                <Tooltip role="tooltip">The GDP per Capita PPP axis has 3 values that cannot be computed as a logarithm.</Tooltip>
              </ChartBox>
            </Viz>
            <Legends>
              <Legend>
                <LegendTitle>SUM(Score 2022)</LegendTitle>
                <SizeList>
                  {sizes.map((s) => (
                    <SizeRow key={s.v}>
                      <SizeDot width="22" height="22" viewBox="0 0 22 22">
                        <circle cx="11" cy="11" r={s.r} fill={s.r > 2 ? "#d6d6d6" : "#b0b0b0"} stroke={s.r > 2 ? "#b0b0b0" : "none"} strokeWidth="1.500" />
                      </SizeDot>
                      <SizeValue>{s.v}</SizeValue>
                    </SizeRow>
                  ))}
                </SizeList>
              </Legend>
              <Legend>
                <LegendTitle>SUM(Region Rank)</LegendTitle>
                <Ramp />
                <RampEnds><span>0</span><span>47</span></RampEnds>
              </Legend>
            </Legends>
          </SheetArea>
        </Workspace>
      </Main>

      <SheetTabs>
        <SheetTab $w={131}>
          <Svg w={15} h={13}><path d="M5 3v7c0 2 7 2 7 0V3M5 3c0-2 7-2 7 0s-7 2-7 0z" /></Svg>
          Data Source
        </SheetTab>
        {sheets.map((s) => (
          <SheetTab key={s.name} $w={s.w} $active={s.active} $align={s.align}>{s.name}</SheetTab>
        ))}
        <SheetTab $w={20} $grow $align="center" aria-label="New worksheet">
          <Svg w={16} h={16} sw={1.2}><path d="M8 13H2V1.500h12V8M5 10V8M7.500 10V5M10 9V6M9 12h7M12.500 8.500v7" /></Svg>
        </SheetTab>
        <SheetTab $w={20} $grow $align="center" aria-label="New dashboard">
          <Svg w={16} h={16} sw={1.2}><path d="M8 13H2V1.500h12V8M2 7h12M8 1.500V13M9 12h7M12.500 8.500v7" /></Svg>
        </SheetTab>
        <SheetTab $w={20} $grow $align="center" aria-label="New story">
          <Svg w={16} h={16} sw={1.2}><path d="M8 13l-6-2V1.500L8 4l6-2.500V8M8 4v9M9 12h7M12.500 8.500v7" /></Svg>
        </SheetTab>
      </SheetTabs>
      <StatusBar>
        <StatusTexts>
          <span>180 marks</span>
          <span>1 row by 1 column</span>
          <span>SUM(Region Rank): 3,560</span>
        </StatusTexts>
        <StatusCell $w={127} />
        <StatusCell $w={27} />
        <StatusCell $w={27} />
        <StatusCell $w={47} />
        <StatusCell $w={71}>
          <svg width="8" height="7" fill="#555"><path d="M0 0h1.500v7H0zM7 0v7L2.500 3.500z" /></svg>
          <svg width="5" height="7" fill="#555"><path d="M5 0v7L0 3.500z" /></svg>
          <svg width="5" height="7" fill="#555"><path d="M0 0v7l5-3.500z" /></svg>
          <svg width="8" height="7" fill="#555"><path d="M0 0v7l4.500-3.500zM5.500 0H7v7H5.500z" /></svg>
        </StatusCell>
        <StatusCell $w={68}>
          <svg width="11" height="11" fill="#b5b5b5"><path d="M0 0h3v3H0zM4 0h3v3H4zM8 0h3v3H8zM0 4h3v3H0zM4 4h3v3H4zM8 4h3v3H8zM0 8h3v3H0zM4 8h3v3H4zM8 8h3v3H8z" /></svg>
          <svg width="11" height="11" fill="#b5b5b5"><path d="M0 0h11v7H0zM0 8h3v3H0zM4 8h3v3H4zM8 8h3v3H8z" /></svg>
          <svg width="11" height="11" fill="#666"><path d="M0 0h11v11H0z" /></svg>
        </StatusCell>
      </StatusBar>

      <Taskbar>
        <TaskSide><button aria-label="Weather"><WeatherIcon /></button></TaskSide>
        <TaskIcons>
          {taskIcons.map(({ name, Icon, badge, open, active }) => (
            <TaskIcon key={name} aria-label={name} $open={open} $active={active}>
              <Icon badge={badge} />
            </TaskIcon>
          ))}
        </TaskIcons>
        <Tray>
          <TrayIcons>
            <Svg w={12} h={12} sw={1.4}><path d="M1 9l5-5 5 5" /></Svg>
          </TrayIcons>
          <TrayText $align="center" $gap={18}>ENG<br />IN</TrayText>
          <TrayIcons>
            <Svg w={16} h={14} sw={1.3}><path d="M1 5c4-4.500 10-4.500 14 0M3.300 7.500c3-3 6.400-3 9.400 0M5.500 10c1.500-1.500 3.500-1.500 5 0" /><circle cx="8" cy="12" r="1" fill="currentColor" /></Svg>
            <Svg w={17} h={14} sw={1.1}><path d="M1 5h2.500L7 2v10L3.500 9H1zM9 5c1 1 1 3 0 4M11 3c2.500 2 2.500 6 0 8M13 1.500c4 3 4 8 0 11" /></Svg>
            <Svg w={17} h={12} sw={1.2}><rect x="1" y="2" width="13" height="8" rx="2" /><path d="M3 4h5v4H3z" fill="currentColor" /><path d="M15.500 4.500v3" strokeWidth="2" /></Svg>
          </TrayIcons>
          <TrayText $align="right" $gap={9}>3:31 PM<br />6/27/2025</TrayText>
          <Svg w={15} h={16} sw={1.2}><path d="M7 2C3 2 3 5 3 8l-2 4h12l-1.500-3M5 12.500c.5 2.500 3.500 2.500 4 0M6 5h3.500L6 9h3.500M11 1h3l-3 3.500h3" /></Svg>
        </Tray>
      </Taskbar>
    </Page>
  );
}
